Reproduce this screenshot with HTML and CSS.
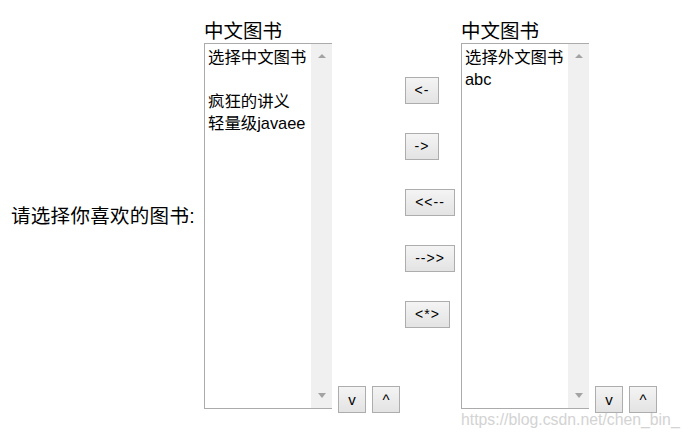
FILE: index.html
```html
<!DOCTYPE html>
<html lang="zh-CN">
<head>
<meta charset="utf-8">
<title>选择图书</title>
<link rel="stylesheet" href="styles.css">
</head>
<body>
<div class="page">
  <form class="row">
    <div class="prompt">请选择你喜欢的图书:</div>

    <div class="list-col">
      <div class="list-title">中文图书</div>
      <div class="listbox">
        <ul class="options">
          <li>选择中文图书</li>
          <li>&nbsp;</li>
          <li>疯狂的讲义</li>
          <li>轻量级javaee</li>
        </ul>
        <div class="scrollbar"><span class="arrow up"></span><span class="arrow down"></span></div>
      </div>
    </div>

    <div class="order-btns">
      <button type="button" class="btn btn-order">v</button>
      <button type="button" class="btn btn-order">^</button>
    </div>

    <div class="move-btns">
      <button type="button" class="btn btn-sm">&lt;-</button>
      <button type="button" class="btn btn-sm">-&gt;</button>
      <button type="button" class="btn btn-lg">&lt;&lt;--</button>
      <button type="button" class="btn btn-lg">--&gt;&gt;</button>
      <button type="button" class="btn btn-md">&lt;*&gt;</button>
    </div>

    <div class="list-col">
      <div class="list-title">中文图书</div>
      <div class="listbox">
        <ul class="options">
          <li>选择外文图书</li>
          <li>abc</li>
        </ul>
        <div class="scrollbar"><span class="arrow up"></span><span class="arrow down"></span></div>
      </div>
    </div>

    <div class="order-btns">
      <button type="button" class="btn btn-order">v</button>
      <button type="button" class="btn btn-order">^</button>
    </div>
  </form>
  <div class="watermark">https://blog.csdn.net/chen_bin_</div>
</div>
</body>
</html>
```

FILE: styles.css
```css
html, body {
  margin: 0;
  padding: 0;
  background: #ffffff;
}

body {
  font-family: "Liberation Sans", "Noto Sans CJK SC", sans-serif;
  color: #000000;
}

.page {
  position: relative;
  width: 689px;
  height: 439px;
  padding: 19px 0 0 11px;
  box-sizing: border-box;
}

.row {
  display: flex;
  align-items: stretch;
  margin: 0;
}

.prompt {
  flex: 0 0 193px;
  align-self: center;
  font-size: 19.5px;
  line-height: 26px;
  white-space: nowrap;
  letter-spacing: 0.3px;
}

.list-col {
  flex: 0 0 128px;
  display: flex;
  flex-direction: column;
  padding-bottom: 4px;
}

.list-title {
  height: 24px;
  font-size: 19.5px;
  line-height: 24px;
  white-space: nowrap;
}

.listbox {
  height: 366px;
  box-sizing: border-box;
  border: 1px solid #ababab;
  border-right: none;
  display: flex;
  background: #ffffff;
}

.options {
  flex: 1;
  list-style: none;
  margin: 0;
  padding: 2px 0 0 3px;
  font-size: 16.4px;
  line-height: 22px;
  white-space: nowrap;
  overflow: hidden;
}

.scrollbar {
  flex: 0 0 21px;
  background: #f0f0f0;
  display: flex;
  flex-direction: column;
  justify-content: space-between;
  align-items: center;
  padding: 10px 0 10px;
  box-sizing: border-box;
}

.arrow {
  width: 0;
  height: 0;
  border-left: 4.5px solid transparent;
  border-right: 4.5px solid transparent;
}

.arrow.up {
  border-bottom: 4px solid #a3a3a3;
}

.arrow.down {
  border-top: 5px solid #a3a3a3;
}

.order-btns {
  align-self: flex-end;
  display: flex;
  gap: 6px;
  margin-left: 6px;
}

.move-btns {
  flex: 0 0 50px;
  align-self: flex-start;
  display: flex;
  flex-direction: column;
  align-items: flex-start;
  gap: 29px;
  padding-top: 58px;
  margin-left: 5px;
  margin-right: 6px;
}

.btn {
  height: 27px;
  padding: 0;
  margin: 0;
  box-sizing: border-box;
  border: 1px solid #adadad;
  border-radius: 0;
  background: linear-gradient(#f4f4f4, #e3e3e3);
  font-family: "Liberation Sans", sans-serif;
  font-size: 14px;
  letter-spacing: 1px;
  color: #000000;
  line-height: 25px;
  text-align: center;
}

.btn-sm { width: 34px; }
.btn-md { width: 45px; }
.btn-lg { width: 50px; }

.btn-order {
  width: 28px;
  letter-spacing: 0;
  font-size: 15px;
}

.watermark {
  position: absolute;
  left: 461px;
  top: 410px;
  font-family: "Liberation Sans", sans-serif;
  font-size: 15.8px;
  line-height: 20px;
  color: #d3d3d3;
  white-space: nowrap;
}
```
